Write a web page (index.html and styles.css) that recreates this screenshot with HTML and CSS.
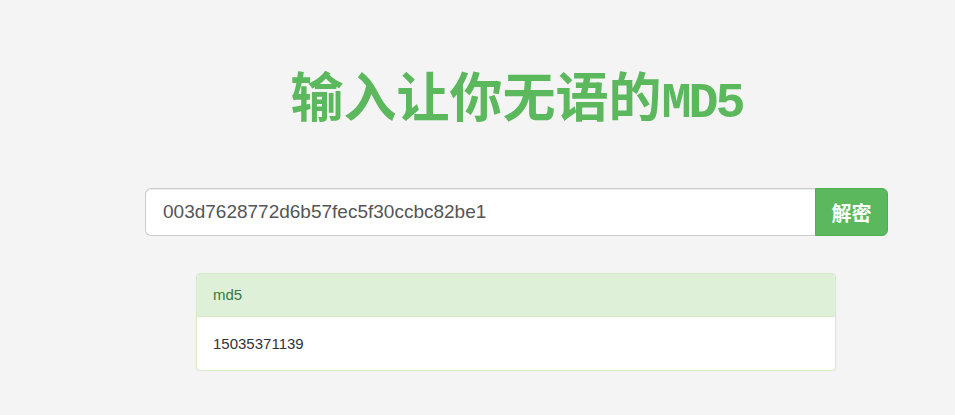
FILE: index.html
```html
<!DOCTYPE html>
<html lang="zh-CN">
<head>
    <meta charset="UTF-8">
    <title>MD5解密</title>
    <link rel="stylesheet" href="styles.css">
</head>
<body>
    <div class="wrap">
        <h1 class="title">输入让你无语的<span class="latin">MD5</span></h1>

        <form class="search">
            <input class="search-input" type="text" value="003d7628772d6b57fec5f30ccbc82be1">
            <button class="search-btn" type="button">解密</button>
        </form>

        <div class="panel">
            <div class="panel-heading">md5</div>
            <div class="panel-body">15035371139</div>
        </div>
    </div>
</body>
</html>
```

FILE: styles.css
```css
* {
    box-sizing: border-box;
}

body {
    margin: 0;
    background: #f4f4f4;
    font-family: "Liberation Sans", Arial, "Noto Sans CJK SC", sans-serif;
    font-size: 15px;
    color: #333;
}

.wrap {
    width: 743px;
    margin-left: 145px;
    display: flex;
    flex-direction: column;
}

.title {
    margin: 61px 0 0;
    height: 75px;
    text-align: center;
    color: #5cb85c;
    font-size: 53px;
    line-height: 66px;
    font-weight: 700;
    font-family: "Noto Sans CJK SC", sans-serif;
}

.title .latin {
    font-family: "Liberation Mono", monospace;
    font-size: 50px;
    letter-spacing: -3px;
}

.search {
    display: flex;
    margin-top: 52px;
}

.search-input {
    flex: 1;
    height: 48px;
    padding: 0 17px;
    border: 1px solid #ccc;
    border-right: none;
    border-radius: 6px 0 0 6px;
    font-family: "Liberation Sans", Arial, sans-serif;
    font-size: 19px;
    color: #555;
    background: #fff;
    box-shadow: inset 0 1px 1px rgba(0, 0, 0, 0.075);
}

.search-btn {
    width: 73px;
    height: 48px;
    border: 1px solid #4cae4c;
    border-radius: 0 6px 6px 0;
    background: #5cb85c;
    color: #fff;
    font-size: 20px;
    font-weight: 700;
    font-family: "Noto Sans CJK SC", sans-serif;
    padding: 0;
}

.panel {
    margin: 37px 52px 0 51px;
    background: #fff;
    border: 1px solid #d6e9c6;
    border-radius: 4px;
    box-shadow: 0 1px 1px rgba(0, 0, 0, 0.05);
}

.panel-heading {
    padding: 12px 16px;
    background: #dff0d8;
    color: #3c763d;
    border-bottom: 1px solid #d6e9c6;
    border-radius: 3px 3px 0 0;
    line-height: 18px;
}

.panel-body {
    padding: 16px;
    line-height: 21px;
}
```
